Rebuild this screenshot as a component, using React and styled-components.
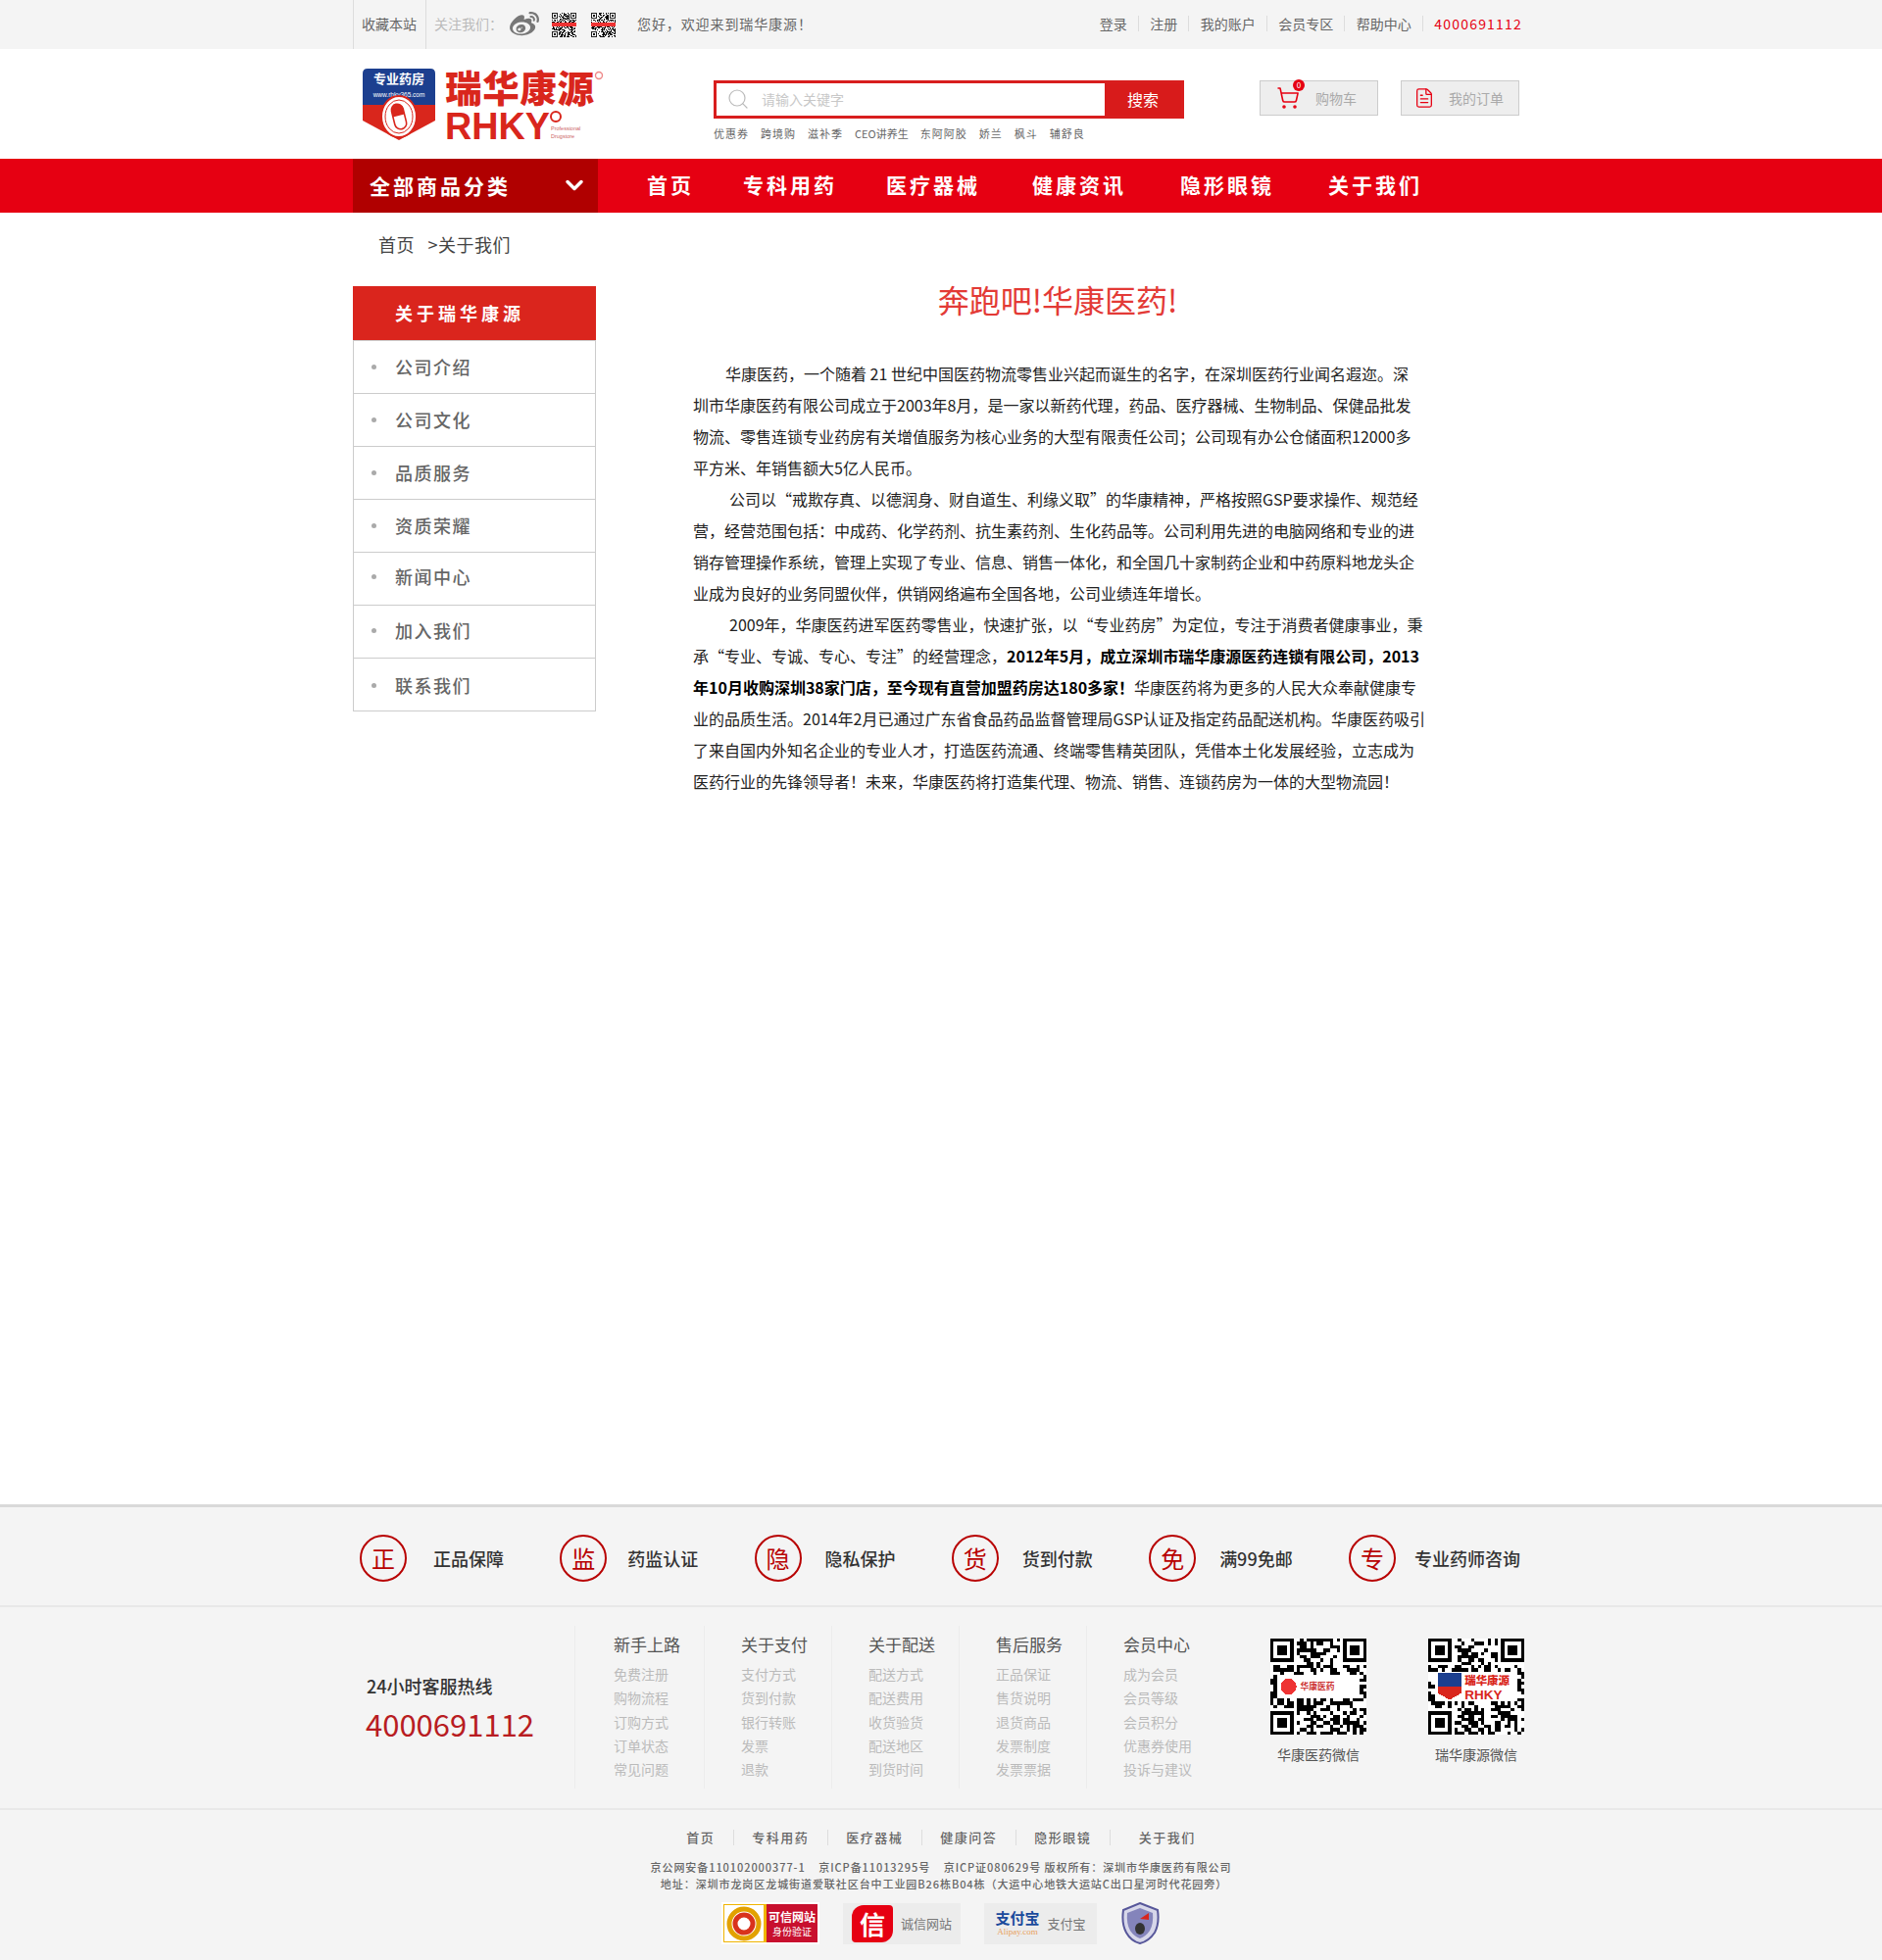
import React from "react";
import styled, { createGlobalStyle } from "styled-components";
import { FaWeibo } from "react-icons/fa";
import { ChevronDown, Search, ShoppingCart, FileText } from "lucide-react";

const GlobalStyle = createGlobalStyle`
  html, body { margin: 0; padding: 0; background: #fff; }
  body {
    font-family: "Noto Sans CJK SC", "Liberation Sans", sans-serif;
    color: #333;
    text-spacing-trim: space-all;
  }
  * { box-sizing: border-box; }
  ul { list-style: none; margin: 0; padding: 0; }
`;

//=====qr code drawing=====
const qrCells = (seed, size = 29) => {
  let s = seed;
  const next = () => {
    s = (s * 16807) % 2147483647;
    return s / 2147483647;
  };
  let d = "";
  const inFinder = (x, y) =>
    (x < 8 && y < 8) || (x >= size - 8 && y < 8) || (x < 8 && y >= size - 8);
  for (let y = 0; y < size; y++) {
    for (let x = 0; x < size; x++) {
      if (!inFinder(x, y) && next() > 0.5) d += `M${x} ${y}h1v1h-1z`;
    }
  }
  return d;
};

const Finder = ({ x, y }) => (
  <g>
    <rect x={x + 0.5} y={y + 0.5} width="6" height="6" fill="none" stroke="#000" />
    <rect x={x + 2} y={y + 2} width="3" height="3" fill="#000" />
  </g>
);

const QrCode = ({ seed, size, children }) => (
  <svg width={size} height={size} viewBox="0 0 29 29" shapeRendering="crispEdges">
    <rect width="29" height="29" fill="#fff" />
    <path d={qrCells(seed)} fill="#000" />
    <Finder x={0} y={0} />
    <Finder x={22} y={0} />
    <Finder x={0} y={22} />
    {children}
  </svg>
);

const Logo = () => (
  <svg width="250" height="78" viewBox="0 0 250 78" overflow="visible">
    <path d="M0 6q0-5 5-5h64q5 0 5 5v32H0z" fill="#1c3f8f" />
    <path d="M0 38h74v16L37 74 0 54z" fill="#d9261c" />
    <text x="37" y="16" fill="#fff" fontSize="13" fontWeight="700" textAnchor="middle">专业药房</text>
    <text x="37" y="30" fill="#fff" fontSize="6.5" textAnchor="middle" fontFamily="Liberation Sans">www.rhky365.com</text>
    <ellipse cx="37" cy="50" rx="18" ry="21" fill="#fff" stroke="#d9261c" strokeWidth="2" />
    <ellipse cx="37" cy="50" rx="14" ry="17" fill="none" stroke="#d9261c" strokeWidth="1" />
    <g transform="rotate(-14 37 50)">
      <rect x="31" y="37" width="12" height="26" rx="6" fill="#fff" stroke="#d9261c" strokeWidth="1.6" />
      <path d="M31 49v-6a6 6 0 0 1 12 0v6z" fill="#d9261c" />
    </g>
    <text x="84" y="35" fill="#d9261c" fontSize="37.5" fontWeight="900" textLength="152">瑞华康源</text>
    <text x="84" y="73" fill="#d9261c" fontSize="39" fontWeight="700" fontFamily="Liberation Sans" textLength="107" lengthAdjust="spacingAndGlyphs">RHKY</text>
    <circle cx="197" cy="50" r="5" fill="none" stroke="#d9261c" strokeWidth="2" />
    <text x="192" y="64" fill="#c66" fontSize="5.5" fontFamily="Liberation Sans">Professional</text>
    <text x="192" y="72" fill="#c66" fontSize="5.5" fontFamily="Liberation Sans">Drugstore</text>
    <circle cx="241" cy="8" r="3.5" fill="none" stroke="#e88" strokeWidth="1.4" />
  </svg>
);

const TrustRing = () => (
  <svg width="38" height="38" viewBox="0 0 38 38">
    <circle cx="19" cy="19" r="15" fill="none" stroke="#e2a100" strokeWidth="5" />
    <circle cx="19" cy="19" r="9" fill="none" stroke="#d9321c" strokeWidth="5" />
    <circle cx="19" cy="19" r="3" fill="#fff" />
  </svg>
);

const PoliceBadge = () => (
  <svg width="41" height="43" viewBox="0 0 41 43">
    <path d="M20 1l18 7q2 14-3 23-6 9-15 11Q11 40 6 31 1 22 3 8z" fill="#d7d7ea" stroke="#57579a" strokeWidth="2" />
    <path d="M20 6l13 5q1 11-3 18-4 6-10 8-6-2-10-8-4-7-3-18z" fill="#8484bb" />
    <path d="M20 17l9-6v7z" fill="#d9261c" />
    <ellipse cx="20" cy="27" rx="5" ry="6" fill="#333" />
  </svg>
);

const hotWords = ["优惠券", "跨境购", "滋补季", "CEO讲养生", "东阿阿胶", "娇兰", "枫斗", "辅舒良"];
const topLinks = ["登录", "注册", "我的账户", "会员专区", "帮助中心"];
const navLinks = [
  { label: "首页", gap: 0 },
  { label: "专科用药", gap: 50 },
  { label: "医疗器械", gap: 50 },
  { label: "健康资讯", gap: 53 },
  { label: "隐形眼镜", gap: 55 },
  { label: "关于我们", gap: 55 },
];
const sideLinks = [
  { label: "公司介绍", line: 52 },
  { label: "公司文化", line: 52 },
  { label: "品质服务", line: 52 },
  { label: "资质荣耀", line: 52 },
  { label: "新闻中心", line: 48 },
  { label: "加入我们", line: 50 },
  { label: "联系我们", line: 54 },
];
const services = [
  { mark: "正", label: "正品保障", gap: 27 },
  { mark: "监", label: "药监认证", gap: 21 },
  { mark: "隐", label: "隐私保护", gap: 24 },
  { mark: "货", label: "货到付款", gap: 24 },
  { mark: "免", label: "满99免邮", gap: 24 },
  { mark: "专", label: "专业药师咨询", gap: 19 },
];
const helpColumns = [
  { title: "新手上路", items: ["免费注册", "购物流程", "订购方式", "订单状态", "常见问题"] },
  { title: "关于支付", items: ["支付方式", "货到付款", "银行转账", "发票", "退款"] },
  { title: "关于配送", items: ["配送方式", "配送费用", "收货验货", "配送地区", "到货时间"] },
  { title: "售后服务", items: ["正品保证", "售货说明", "退货商品", "发票制度", "发票票据"] },
  { title: "会员中心", items: ["成为会员", "会员等级", "会员积分", "优惠券使用", "投诉与建议"] },
];
const bottomLinks = ["首页", "专科用药", "医疗器械", "健康问答", "隐形眼镜", "关于我们"];

export default function App() {
  return (
    <Page>
      <GlobalStyle />
      <TopBar>
        <Wrap>
          <TopLeft>
            <Favorite>收藏本站</Favorite>
            <Follow>关注我们：</Follow>
            <WeiboIcon><FaWeibo size={30} color="#777" /></WeiboIcon>
            <TopQr><QrCode seed={11} size={25}><rect y="12" width="29" height="4" fill="#e33" /></QrCode></TopQr>
            <TopQr><QrCode seed={37} size={25}><rect y="12" width="29" height="4" fill="#e33" /></QrCode></TopQr>
            <Welcome>您好，欢迎来到瑞华康源！</Welcome>
          </TopLeft>
          <TopRight>
            {topLinks.map((item) => (
              <TopLink key={item}>{item}</TopLink>
            ))}
            <TopPhone>4000691112</TopPhone>
          </TopRight>
        </Wrap>
      </TopBar>

      <Header>
        <Wrap>
          <LogoBox><Logo /></LogoBox>
          <SearchArea>
            <SearchBox>
              <SearchInput>
                <Search size={24} strokeWidth={1.2} color="#bbb" />
                <span>请输入关键字</span>
              </SearchInput>
              <SearchButton>搜索</SearchButton>
            </SearchBox>
            <HotWords>
              {hotWords.map((item) => (
                <li key={item}>{item}</li>
              ))}
            </HotWords>
          </SearchArea>
          <HeaderButtons>
            <HeaderButton $pad={16} $gap={16}>
              <CartIcon>
                <ShoppingCart size={24} strokeWidth={1.6} color="#e60012" />
                <CartCount>0</CartCount>
              </CartIcon>
              购物车
            </HeaderButton>
            <HeaderButton $pad={12} $gap={14}>
              <FileText size={22} strokeWidth={1.4} color="#e60012" />
              我的订单
            </HeaderButton>
          </HeaderButtons>
        </Wrap>
      </Header>

      <NavBar>
        <Wrap>
          <Category>
            全部商品分类
            <ChevronDown size={28} strokeWidth={3} color="#fff" />
          </Category>
          <NavList>
            {navLinks.map((item) => (
              <NavItem key={item.label} $gap={item.gap}>{item.label}</NavItem>
            ))}
          </NavList>
        </Wrap>
      </NavBar>

      <Main>
        <Breadcrumb>首页&nbsp;&nbsp;&nbsp;&gt;关于我们</Breadcrumb>
        <Columns>
          <Sidebar>
            <SideHead>关于瑞华康源</SideHead>
            {sideLinks.map((item) => (
              <SideItem key={item.label} $line={item.line}>{item.label}</SideItem>
            ))}
          </Sidebar>
          <Article>
            <ArticleTitle>奔跑吧!华康医药!</ArticleTitle>
            <Para $indent={33}>
              华康医药，一个随着 21 世纪中国医药物流零售业兴起而诞生的名字，在深圳医药行业闻名遐迩。深<br />
              圳市华康医药有限公司成立于2003年8月，是一家以新药代理，药品、医疗器械、生物制品、保健品批发<br />
              物流、零售连锁专业药房有关增值服务为核心业务的大型有限责任公司；公司现有办公仓储面积12000多<br />
              平方米、年销售额大5亿人民币。
            </Para>
            <Para $indent={37}>
              公司以“戒欺存真、以德润身、财自道生、利缘义取”的华康精神，严格按照GSP要求操作、规范经<br />
              营，经营范围包括：中成药、化学药剂、抗生素药剂、生化药品等。公司利用先进的电脑网络和专业的进<br />
              销存管理操作系统，管理上实现了专业、信息、销售一体化，和全国几十家制药企业和中药原料地龙头企<br />
              业成为良好的业务同盟伙伴，供销网络遍布全国各地，公司业绩连年增长。
            </Para>
            <Para $indent={37}>
              2009年，华康医药进军医药零售业，快速扩张，以“专业药房”为定位，专注于消费者健康事业，秉<br />
              承“专业、专诚、专心、专注”的经营理念，<strong>2012年5月，成立深圳市瑞华康源医药连锁有限公司，2013<br />
              年10月收购深圳38家门店，至今现有直营加盟药房达180多家！</strong>华康医药将为更多的人民大众奉献健康专<br />
              业的品质生活。2014年2月已通过广东省食品药品监督管理局GSP认证及指定药品配送机构。华康医药吸引<br />
              了来自国内外知名企业的专业人才，打造医药流通、终端零售精英团队，凭借本土化发展经验，立志成为<br />
              医药行业的先锋领导者！未来，华康医药将打造集代理、物流、销售、连锁药房为一体的大型物流园！
            </Para>
          </Article>
        </Columns>
      </Main>

      <Footer>
        <ServiceBar>
          <ServiceRow>
            {services.map((item) => (
              <ServiceItem key={item.mark} $gap={item.gap}>
                <ServiceMark>{item.mark}</ServiceMark>
                {item.label}
              </ServiceItem>
            ))}
          </ServiceRow>
        </ServiceBar>

        <HelpBar>
          <HelpRow>
            <Hotline>
              <HotlineLabel>24小时客服热线</HotlineLabel>
              <HotlineNumber>4000691112</HotlineNumber>
            </Hotline>
            <HelpColumns>
              {helpColumns.map((col) => (
                <HelpColumn key={col.title}>
                  <HelpTitle>{col.title}</HelpTitle>
                  {col.items.map((item) => (
                    <HelpLink key={item}>{item}</HelpLink>
                  ))}
                </HelpColumn>
              ))}
            </HelpColumns>
            <QrGroup>
              <QrBlock>
                <QrCode seed={4242} size={98}>
                  <rect x="2" y="11" width="25" height="7" fill="#fff" />
                  <circle cx="5.5" cy="14.5" r="2.4" fill="#e33" />
                  <text x="9" y="15.5" fontSize="2.6" fill="#c33" fontWeight="700">华康医药</text>
                </QrCode>
                <span>华康医药微信</span>
              </QrBlock>
              <QrBlock>
                <QrCode seed={9001} size={98}>
                  <rect x="2" y="10" width="25" height="9" fill="#fff" />
                  <rect x="3" y="10.5" width="7" height="4" fill="#1c3f8f" />
                  <path d="M3 14.5h7v2l-3.5 2-3.5-2z" fill="#d9261c" />
                  <text x="11" y="14" fontSize="3.4" fill="#d9261c" fontWeight="900">瑞华康源</text>
                  <text x="11" y="18.4" fontSize="4" fill="#d9261c" fontWeight="700" fontFamily="Liberation Sans">RHKY</text>
                </QrCode>
                <span>瑞华康源微信</span>
              </QrBlock>
            </QrGroup>
          </HelpRow>
        </HelpBar>

        <BottomBar>
          <BottomNav>
            {bottomLinks.map((item) => (
              <li key={item}>{item}</li>
            ))}
          </BottomNav>
          <Copyright>
            京公网安备110102000377-1 &nbsp;&nbsp;&nbsp;京ICP备11013295号 &nbsp;&nbsp;&nbsp;京ICP证080629号 版权所有：深圳市华康医药有限公司
          </Copyright>
          <Copyright $shift={6}>
            地址：深圳市龙岗区龙城街道爱联社区台中工业园B26栋B04栋（大运中心地铁大运站C出口星河时代花园旁）
          </Copyright>
          <Badges>
            <TrustBadge>
              <TrustLogo><TrustRing /></TrustLogo>
              <TrustText>
                <b>可信网站</b>
                <small>身份验证</small>
              </TrustText>
            </TrustBadge>
            <GreyBadge $width={120}>
              <CreditMark>信</CreditMark>
              诚信网站
            </GreyBadge>
            <GreyBadge $width={115}>
              <AlipayMark>
                <b>支付宝</b>
                <small>Alipay.com</small>
              </AlipayMark>
              支付宝
            </GreyBadge>
            <PoliceBadge />
          </Badges>
        </BottomBar>
      </Footer>
    </Page>
  );
}

const Page = styled.div`
  width: 1920px;
  min-height: 2000px;
  display: flex;
  flex-direction: column;
`;

const Wrap = styled.div`
  width: 1200px;
  margin: 0 auto;
  height: 100%;
  display: flex;
  align-items: center;
`;

const TopBar = styled.div`
  height: 50px;
  background: #f4f4f4;
  font-size: 14px;
  color: #666;
`;

const TopLeft = styled.div`
  display: flex;
  align-items: center;
  height: 100%;
  line-height: 18px;
`;

const Favorite = styled.span`
  height: 100%;
  display: flex;
  align-items: center;
  padding: 0 9px 2px 8px;
  border-left: 1px solid #ddd;
  border-right: 1px solid #ddd;
`;

const Follow = styled.span`
  margin-left: 8px;
  margin-bottom: 2px;
  color: #bbb;
`;

const WeiboIcon = styled.span`
  display: flex;
  margin: 0 13px 0 7px;
`;

const TopQr = styled.span`
  display: flex;
  margin-right: 15px;
`;

const Welcome = styled.span`
  margin-left: 7px;
  margin-bottom: 2px;
  letter-spacing: 0.9px;
`;

const TopRight = styled.div`
  margin-left: auto;
  display: flex;
  align-items: center;
  padding: 0 7px 2px 0;
`;

const TopLink = styled.span`
  padding-right: 11px;
  margin-right: 11.5px;
  line-height: 16px;
  border-right: 1px solid #ddd;
`;

const TopPhone = styled.span`
  color: #e60012;
  letter-spacing: 1.2px;
`;

const Header = styled.div`
  height: 112px;
`;

const LogoBox = styled.div`
  display: flex;
  margin-left: 10px;
  width: 358px;
  margin-top: 4px;
`;

const SearchArea = styled.div`
  width: 480px;
  margin-top: 13px;
`;

const SearchBox = styled.div`
  height: 39px;
  display: flex;
  border: 3px solid #d81e1e;
`;

const SearchInput = styled.div`
  flex: 1;
  display: flex;
  align-items: center;
  gap: 12px;
  padding-left: 10px;
  font-size: 14px;
  color: #c8c8c8;
`;

const SearchButton = styled.div`
  width: 78px;
  background: #d81b1b;
  color: #fff;
  font-size: 16px;
  display: flex;
  align-items: center;
  justify-content: center;
`;

const HotWords = styled.ul`
  display: flex;
  gap: 12px;
  margin-top: 7px;
  font-size: 11px;
  line-height: 16px;
  letter-spacing: 1px;
  color: #666;

  li:nth-child(4) {
    letter-spacing: 0;
  }
`;

const HeaderButtons = styled.div`
  margin-left: auto;
  margin-right: 10px;
  margin-top: -12px;
  display: flex;
  gap: 23px;
`;

const HeaderButton = styled.div`
  width: 121px;
  height: 36px;
  display: flex;
  align-items: center;
  gap: ${(p) => p.$gap}px;
  padding-left: ${(p) => p.$pad}px;
  background: #eee;
  border: 1px solid #ccc;
  font-size: 14px;
  color: #aaa;
`;

const CartIcon = styled.span`
  position: relative;
  display: flex;
`;

const CartCount = styled.span`
  position: absolute;
  top: -7px;
  right: -5px;
  width: 12px;
  height: 12px;
  border-radius: 50%;
  background: #e60012;
  color: #fff;
  font-size: 8px;
  line-height: 12px;
  text-align: center;
`;

const NavBar = styled.div`
  height: 55px;
  background: #e60012;
`;

const Category = styled.div`
  width: 250px;
  height: 100%;
  background: #b00000;
  color: #fff;
  font-size: 21px;
  font-weight: 700;
  letter-spacing: 3px;
  display: flex;
  align-items: center;
  justify-content: space-between;
  padding: 0 10px 2px 17px;
`;

const NavList = styled.ul`
  display: flex;
  margin: 0 0 4px 50px;
  color: #fff;
  font-size: 21px;
  font-weight: 700;
  letter-spacing: 3px;
`;

const NavItem = styled.li`
  margin-left: ${(p) => p.$gap}px;
`;

const Main = styled.div`
  height: 1318px;
  width: 1200px;
  margin: 0 auto;
`;

const Breadcrumb = styled.div`
  height: 75px;
  padding: 19px 0 0 26px;
  font-size: 18px;
  line-height: 26px;
  letter-spacing: 0.5px;
  color: #444;
`;

const Columns = styled.div`
  display: flex;
`;

const Sidebar = styled.ul`
  width: 248px;
`;

const SideHead = styled.li`
  height: 56px;
  padding-left: 43px;
  background: #da251d;
  background-clip: padding-box;
  border-bottom: 1px solid #ccc;
  color: #fff;
  font-size: 18px;
  font-weight: 700;
  letter-spacing: 4px;
  line-height: 55px;
`;

const SideItem = styled.li`
  height: 54px;
  line-height: ${(p) => p.$line}px;
  padding-left: 42px;
  position: relative;
  border: 1px solid #ccc;
  border-top: 0;
  font-size: 18px;
  font-weight: 500;
  letter-spacing: 1.5px;
  color: #666;

  &::before {
    content: "";
    position: absolute;
    left: 18px;
    top: ${(p) => (p.$line - 52) / 2 + 24}px;
    width: 5px;
    height: 5px;
    border-radius: 50%;
    background: #aaa;
  }
`;

const Article = styled.div`
  margin-left: 99px;
  width: 760px;
`;

const ArticleTitle = styled.h1`
  margin: 0 0 35px;
  height: 38px;
  font-size: 32px;
  line-height: 27px;
  font-weight: 400;
  text-align: center;
  padding-right: 16px;
  color: #e33a36;
`;

const Para = styled.p`
  margin: 0;
  font-size: 16px;
  line-height: 32px;
  color: #222;
  white-space: nowrap;
  text-indent: ${(p) => p.$indent}px;

  strong {
    color: #000;
    font-weight: 700;
  }
`;

const Footer = styled.div`
  background: #f4f4f4;
  border-top: 3px solid #d9d9d9;
`;

const ServiceBar = styled.div`
  height: 102px;
  padding-top: 3px;
  border-bottom: 2px solid #e8e8e8;
`;

const ServiceRow = styled.ul`
  width: 1184px;
  height: 100%;
  margin: 0 auto;
  transform: translateX(-1px);
  display: flex;
  align-items: center;
  justify-content: space-between;
`;

const ServiceItem = styled.li`
  display: flex;
  align-items: center;
  gap: ${(p) => p.$gap}px;
  font-size: 18px;
  font-weight: 500;
  color: #333;
`;

const ServiceMark = styled.span`
  width: 48px;
  height: 48px;
  border: 2px solid #b80000;
  border-radius: 50%;
  display: flex;
  align-items: center;
  justify-content: center;
  color: #b80000;
  font-size: 24px;
  font-weight: 400;
`;

const HelpBar = styled.div`
  height: 207px;
  border-bottom: 2px solid #e8e8e8;
`;

const HelpRow = styled.div`
  width: 1200px;
  height: 100%;
  margin: 0 auto;
  padding-top: 19px;
  display: flex;
`;

const Hotline = styled.div`
  width: 226px;
  padding: 46px 0 0 13px;
`;

const HotlineLabel = styled.div`
  margin-left: 1px;
  font-size: 18px;
  font-weight: 500;
  line-height: 30px;
  color: #333;
`;

const HotlineNumber = styled.div`
  font-size: 31px;
  line-height: 48px;
  color: #b81c22;
`;

const HelpColumns = styled.div`
  display: flex;
  height: 166px;
`;

const HelpColumn = styled.div`
  width: 130px;
  padding: 4px 0 0 37px;
  border-left: 1px solid #ececec;

  &:first-child {
    width: 132px;
    padding-left: 39px;
  }

  &:last-child {
    width: 188px;
  }
`;

const HelpTitle = styled.div`
  font-size: 17px;
  line-height: 30px;
  color: #555;
  margin-bottom: 3px;
`;

const HelpLink = styled.div`
  font-size: 14px;
  line-height: 24.3px;
  color: #bbb;
`;

const QrGroup = styled.div`
  display: flex;
  gap: 63px;
  margin-top: 13px;
`;

const QrBlock = styled.div`
  width: 98px;
  display: flex;
  flex-direction: column;
  align-items: center;
  font-size: 14px;
  line-height: 20px;
  color: #555;

  svg {
    margin-bottom: 10px;
  }

  span {
    white-space: nowrap;
  }
`;

const BottomBar = styled.div`
  height: 153px;
  display: flex;
  flex-direction: column;
  align-items: center;
`;

const BottomNav = styled.ul`
  display: flex;
  margin: 20px 0 14px;
  height: 16px;
  font-size: 13px;
  line-height: 16px;
  font-weight: 500;
  letter-spacing: 1.5px;
  color: #666;

  li {
    padding: 0 18.5px;
    border-left: 1px solid #ddd;
  }
  li:first-child {
    border-left: 0;
  }
  li:last-child {
    padding-left: 29px;
  }
`;

const Copyright = styled.div`
  font-size: 11px;
  line-height: 17px;
  letter-spacing: 0.93px;
  font-weight: 500;
  color: #666;
  white-space: nowrap;
  padding-left: ${(p) => p.$shift || 0}px;
`;

const Badges = styled.div`
  display: flex;
  align-items: center;
  gap: 24px;
  margin-top: 10px;
  height: 43px;
`;

const TrustBadge = styled.div`
  width: 100px;
  height: 43px;
  padding: 2px;
  background: #fff;
  display: flex;
`;

const TrustLogo = styled.div`
  width: 44px;
  background: #fff;
  border: 1px solid #f0b400;
  border-right: 3px solid #f0b400;
  display: flex;
  align-items: center;
  justify-content: center;
`;

const TrustText = styled.div`
  flex: 1;
  background: #c8102e;
  color: #fff;
  display: flex;
  flex-direction: column;
  align-items: center;
  justify-content: center;

  b {
    font-size: 12px;
    line-height: 16px;
  }
  small {
    font-size: 10px;
    line-height: 14px;
  }
`;

const GreyBadge = styled.div`
  width: ${(p) => p.$width}px;
  height: 42px;
  background: #ececec;
  display: flex;
  align-items: center;
  justify-content: center;
  gap: 8px;
  font-size: 13px;
  color: #777;
`;

const CreditMark = styled.span`
  width: 42px;
  height: 38px;
  border-radius: 12px 4px 12px 4px;
  background: #e60012;
  color: #fff;
  font-size: 26px;
  font-weight: 700;
  line-height: 38px;
  text-align: center;
`;

const AlipayMark = styled.span`
  display: flex;
  flex-direction: column;
  align-items: center;

  b {
    font-size: 15px;
    line-height: 18px;
    color: #1a4a9c;
  }
  small {
    font-size: 9px;
    line-height: 11px;
    color: #e8a060;
    font-family: "Liberation Serif", serif;
  }
`;
